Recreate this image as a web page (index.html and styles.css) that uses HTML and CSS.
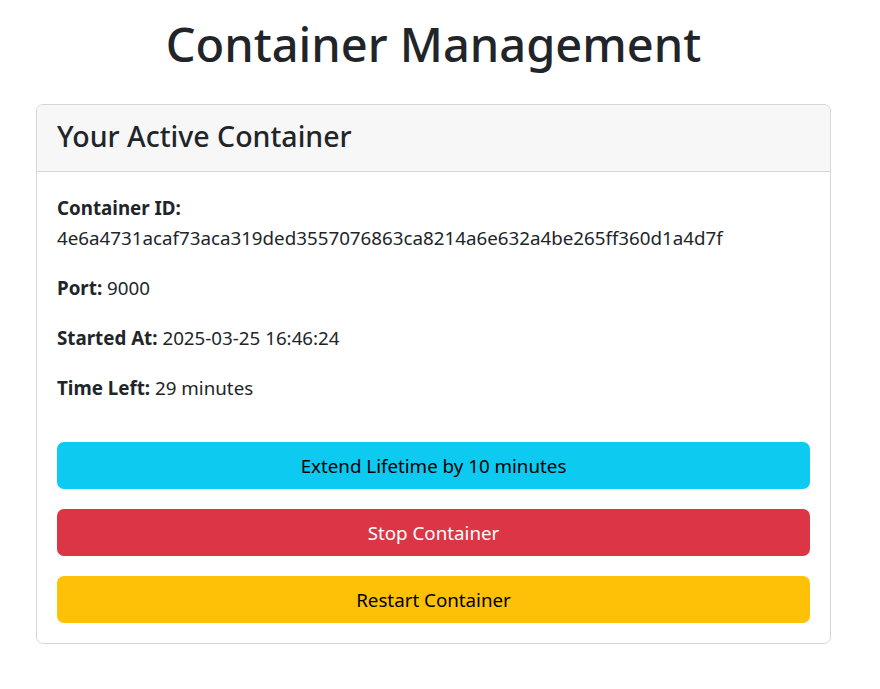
FILE: index.html
```html
<!DOCTYPE html>
<html lang="en">
<head>
<meta charset="utf-8">
<title>Container Management</title>
<link rel="stylesheet" href="styles.css">
</head>
<body>
<main class="container">
  <h1 class="title">Container Management</h1>
  <section class="card">
    <div class="card-header">
      <h2 class="card-title">Your Active Container</h2>
    </div>
    <div class="card-body">
      <p class="info"><strong>Container ID:</strong><br>4e6a4731acaf73aca319ded3557076863ca8214a6e632a4be265ff360d1a4d7f</p>
      <p class="info"><strong>Port:</strong> 9000</p>
      <p class="info"><strong>Started At:</strong> 2025-03-25 16:46:24</p>
      <p class="info"><strong>Time Left:</strong> 29 minutes</p>
      <div class="actions">
        <button class="btn btn-info" type="button">Extend Lifetime by 10 minutes</button>
        <button class="btn btn-danger" type="button">Stop Container</button>
        <button class="btn btn-warning" type="button">Restart Container</button>
      </div>
    </div>
  </section>
</main>
</body>
</html>
```
FILE: styles.css
```css
* { box-sizing: border-box; }
html, body { margin: 0; padding: 0; background: #fff; }
body {
  font-family: "Noto Sans", "Open Sans", sans-serif;
  color: #212529;
  font-size: 18.75px;
  line-height: 30px;
}
.container {
  width: 795px;
  margin: 0 0 0 36px;
  padding-top: 14px;
}
.title {
  margin: 0 0 30px 0;
  text-align: center;
  font-size: 47px;
  font-weight: 500;
  line-height: 60px;
}
.card {
  border: 1px solid #d6d6d6;
  border-radius: 7px;
  overflow: hidden;
}
.card-header {
  background: #f7f7f7;
  border-bottom: 1px solid #d6d6d6;
  padding: 0 20px 5px;
  height: 67px;
  display: flex;
  align-items: center;
}
.card-title {
  margin: 0;
  font-size: 28.5px;
  font-weight: 500;
  line-height: 30px;
}
.card-body {
  padding: 21px 20px 20px;
}
.info {
  margin: 0 0 20px 0;
}
.info strong { font-weight: 700; }
.actions {
  margin-top: 39px;
  display: flex;
  flex-direction: column;
  gap: 20px;
}
.btn {
  display: block;
  width: 100%;
  height: 47px;
  border: 0;
  border-radius: 7px;
  font-family: inherit;
  font-size: 18.75px;
  line-height: 30px;
  color: #000;
  cursor: pointer;
}
.btn-info { background: #0dcaf0; }
.btn-danger { background: #dc3545; color: #fff; }
.btn-warning { background: #ffc107; }
```
